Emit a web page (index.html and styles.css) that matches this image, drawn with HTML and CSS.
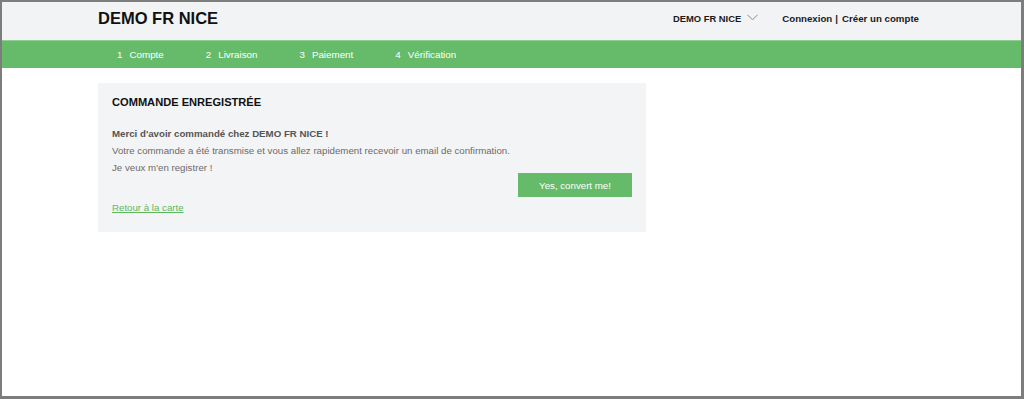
FILE: index.html
```html
<!DOCTYPE html>
<html lang="fr">
<head>
<meta charset="utf-8">
<title>DEMO FR NICE</title>
<link rel="stylesheet" href="styles.css">
</head>
<body>
<div class="frame">
  <header class="topbar">
    <div class="brand">DEMO FR NICE</div>
    <div class="top-right">
      <div class="store">DEMO FR NICE
        <svg class="chev" width="11" height="7" viewBox="0 0 11 7"><polyline points="0.5,0.8 5.5,5.8 10.5,0.8" fill="none" stroke="#8a8a8a" stroke-width="1"/></svg>
      </div>
      <div class="account"><span>Connexion</span><span class="sep">|</span><span>Créer un compte</span></div>
    </div>
  </header>
  <nav class="steps">
    <div class="step"><span class="num">1</span>Compte</div>
    <div class="step"><span class="num">2</span>Livraison</div>
    <div class="step"><span class="num">3</span>Paiement</div>
    <div class="step"><span class="num">4</span>Vérification</div>
  </nav>
  <main class="main">
    <section class="card">
      <h1 class="title">COMMANDE ENREGISTRÉE</h1>
      <p class="msg"><strong>Merci d'avoir commandé chez DEMO FR NICE !</strong><br>Votre commande a été transmise et vous allez rapidement recevoir un email de confirmation.<br>Je veux m'en registrer !</p>
      <div class="actions"><button class="btn">Yes, convert me!</button></div>
      <a class="back" href="#">Retour à la carte</a>
    </section>
  </main>
</div>
</body>
</html>
```
FILE: styles.css
```css
* { box-sizing: border-box; }
html, body { margin: 0; padding: 0; }
body {
  font-family: "Liberation Sans", Arial, sans-serif;
  background: #fff;
}
.frame {
  width: 1024px;
  height: 399px;
  border-style: solid;
  border-color: #7d7d7d;
  border-width: 2px 3px 3px 2px;
  overflow: hidden;
}
.topbar {
  height: 38px;
  background: #f2f3f5;
  display: flex;
  align-items: center;
  justify-content: space-between;
  padding: 0 102px 6px 96px;
}
.brand {
  font-size: 16.5px;
  font-weight: bold;
  color: #111;
}
.top-right {
  display: flex;
  align-items: center;
  font-size: 9.7px;
  font-weight: bold;
  color: #1a1a1a;
}
.store {
  display: flex;
  align-items: center;
  font-size: 9.4px;
}
.chev { margin-left: 6px; margin-top: -1px; }
.account { margin-left: 24px; display: flex; }
.sep { margin: 0 4px 0 3px; }
.steps {
  height: 28px;
  background: #65bb6a;
  border-top: 1px solid #8ecf90;
  display: flex;
  align-items: center;
  padding-left: 96px;
  color: #fff;
  font-size: 9.8px;
}
.step { padding: 0 21px 0 19px; margin-right: 2px; }
.num { margin-right: 7px; }
.main { padding: 15px 0 0 96px; }
.card {
  width: 548px;
  height: 149px;
  background: #f3f4f6;
  padding: 11px 14px 0 14px;
}
.title {
  margin: 0;
  font-size: 11.1px;
  line-height: 16px;
  font-weight: bold;
  color: #111;
}
.msg {
  margin: 15px 0 0;
  font-size: 9.7px;
  line-height: 17px;
  color: #6b6b6b;
}
.msg strong { color: #555; }
.actions {
  display: flex;
  justify-content: flex-end;
  margin-top: -3px;
}
.btn {
  width: 114px;
  height: 24px;
  border: none;
  background: #65bb6a;
  color: #fff;
  font-family: inherit;
  font-size: 9.7px;
  padding: 0;
}
.back {
  display: inline-block;
  font-size: 9.7px;
  line-height: 17px;
  color: #5cb85f;
  text-decoration: underline;
}
```
